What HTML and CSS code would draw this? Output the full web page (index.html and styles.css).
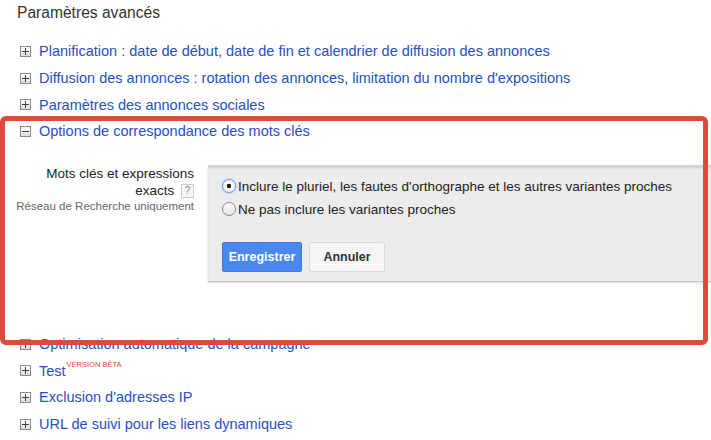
FILE: index.html
```html
<!DOCTYPE html>
<html lang="fr">
<head>
<meta charset="utf-8">
<link rel="stylesheet" href="styles.css">
</head>
<body>
<div class="page">
  <h2 class="title">Paramètres avancés</h2>
  <ul class="sections">
    <li class="row"><span class="toggle plus"></span><a class="link">Planification : date de début, date de fin et calendrier de diffusion des annonces</a></li>
    <li class="row"><span class="toggle plus"></span><a class="link">Diffusion des annonces : rotation des annonces, limitation du nombre d'expositions</a></li>
    <li class="row"><span class="toggle plus"></span><a class="link">Paramètres des annonces sociales</a></li>
    <li class="row"><span class="toggle minus"></span><a class="link">Options de correspondance des mots clés</a></li>
    <li class="expanded">
      <div class="label">
        <div class="label-main">Mots clés et expressions<br>exacts <span class="help">?</span></div>
        <div class="label-sub">Réseau de Recherche uniquement</div>
      </div>
      <div class="panel">
        <label class="radio"><span class="dot checked"></span>Inclure le pluriel, les fautes d'orthographe et les autres variantes proches</label>
        <label class="radio"><span class="dot"></span>Ne pas inclure les variantes proches</label>
        <div class="buttons">
          <button class="btn primary">Enregistrer</button>
          <button class="btn secondary">Annuler</button>
        </div>
      </div>
    </li>
    <li class="row"><span class="toggle plus"></span><a class="link">Optimisation automatique de la campagne</a></li>
    <li class="row"><span class="toggle plus"></span><a class="link">Test</a><sup class="beta">VERSION BÊTA</sup></li>
    <li class="row"><span class="toggle plus"></span><a class="link">Exclusion d'adresses IP</a></li>
    <li class="row"><span class="toggle plus"></span><a class="link">URL de suivi pour les liens dynamiques</a></li>
  </ul>
  <div class="highlight"></div>
</div>
</body>
</html>
```

FILE: styles.css
```css
html, body {
  margin: 0;
  padding: 0;
  background: #ffffff;
}
body {
  font-family: "Liberation Sans", Arial, sans-serif;
  width: 711px;
  height: 440px;
  overflow: hidden;
}
.page {
  position: relative;
  padding-left: 17px;
}
.title {
  margin: 0;
  padding-top: 3px;
  font-size: 15.6px;
  line-height: 19px;
  font-weight: normal;
  color: #333333;
}
.sections {
  list-style: none;
  margin: 16px 0 0 0;
  padding: 0;
}
.row {
  display: flex;
  align-items: center;
  height: 26.7px;
  padding-left: 3px;
}
.toggle {
  position: relative;
  box-sizing: border-box;
  width: 11px;
  height: 11px;
  border: 1px solid #8c8c8c;
  background: linear-gradient(#ffffff, #dcdcdc);
  margin-right: 8px;
  flex: none;
}
.toggle::before,
.toggle.plus::after {
  content: "";
  position: absolute;
  background: #444444;
}
.toggle::before {
  left: 1px;
  right: 1px;
  top: 4px;
  height: 1px;
}
.toggle.plus::after {
  top: 1px;
  bottom: 1px;
  left: 4px;
  width: 1px;
}
.link {
  font-size: 14.5px;
  color: #2850c0;
  white-space: nowrap;
}
.beta {
  font-size: 7.5px;
  color: #e0453a;
  align-self: flex-start;
  margin-top: 3px;
  margin-left: 1px;
}
.expanded {
  display: flex;
  align-items: flex-start;
  margin-top: 20px;
  margin-bottom: 49px;
  margin-left: -17px;
}
.label {
  width: 194px;
  text-align: right;
  padding-right: 14px;
  flex: none;
}
.label-main {
  font-size: 13.5px;
  line-height: 17px;
  color: #222222;
}
.help {
  display: inline-block;
  box-sizing: border-box;
  width: 13px;
  height: 14px;
  border: 1px solid #cccccc;
  background: #f6f6f6;
  color: #888888;
  font-size: 10px;
  line-height: 12px;
  text-align: center;
  vertical-align: 1px;
  margin-left: 3px;
}
.label-sub {
  font-size: 11.5px;
  line-height: 14px;
  color: #666666;
  margin-top: 0;
  white-space: nowrap;
}
.panel {
  flex: 1;
  box-sizing: border-box;
  height: 117px;
  background: #ececec;
  border-top: 1px solid #d2d2d2;
  border-bottom: 1px solid #c4c4c4;
  box-shadow: inset 0 3px 3px -1px rgba(0, 0, 0, 0.12), 0 1px 2px rgba(0, 0, 0, 0.15);
  padding: 9px 0 0 14px;
}
.radio {
  display: flex;
  align-items: center;
  font-size: 13.5px;
  color: #222222;
  height: 23px;
}
.dot {
  box-sizing: border-box;
  width: 14px;
  height: 14px;
  border-radius: 50%;
  border: 1px solid #8d8d8d;
  background: linear-gradient(#ffffff, #e3e3e3);
  margin-right: 2px;
  position: relative;
  flex: none;
}
.dot.checked {
  border-color: #6f9be0;
  background: radial-gradient(circle, #1b1b1b 0 2px, #ffffff 2.6px, #d7e6fb 100%);
  box-shadow: 0 0 2px rgba(80, 140, 240, 0.7);
}
.buttons {
  display: flex;
  gap: 7px;
  margin-top: 21px;
}
.btn {
  height: 30px;
  font-family: "Liberation Sans", Arial, sans-serif;
  font-size: 12.5px;
  font-weight: bold;
  border-radius: 2px;
  padding: 0;
  cursor: pointer;
}
.primary {
  width: 80px;
  background: #4a87ee;
  border: 1px solid #3f7ae0;
  color: #ffffff;
}
.secondary {
  width: 76px;
  background: #f5f5f5;
  border: 1px solid #dadada;
  color: #333333;
}
.highlight {
  position: absolute;
  left: 0;
  top: 116px;
  width: 708px;
  height: 229px;
  box-sizing: border-box;
  border: 5px solid #db4a3c;
  border-radius: 6px;
  pointer-events: none;
}
```
